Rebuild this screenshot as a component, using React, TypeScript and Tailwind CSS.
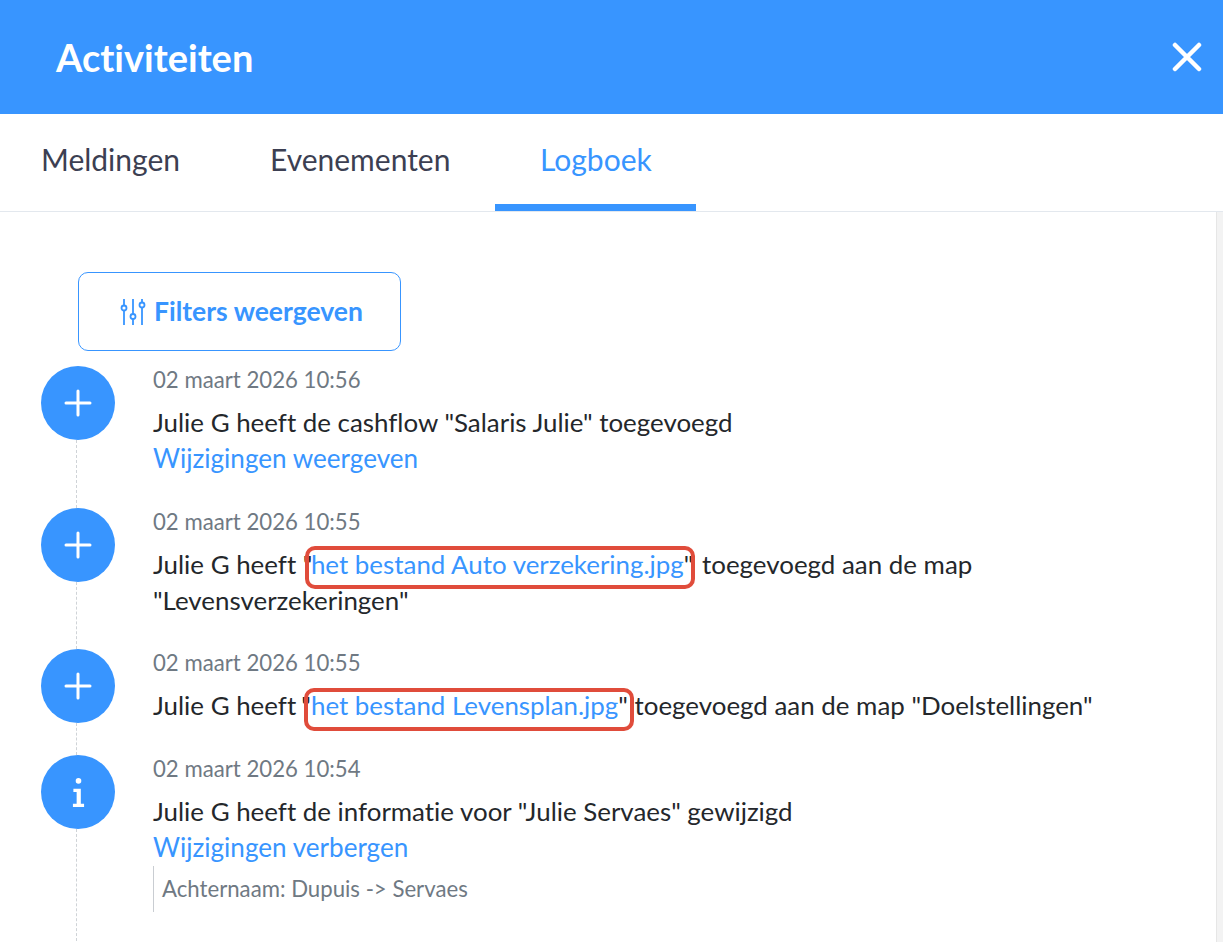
import { ReactNode } from "react";

const Plus = () => (
	<svg width="28" height="28" viewBox="0 0 28 28" fill="none" stroke="white" strokeWidth="3" strokeLinecap="round">
		<path d="M14 2v24M2 14h24" />
	</svg>
);

const Info = () => (
	<svg width="13" height="29" viewBox="0 0 14 31" fill="white">
		<circle cx="7" cy="3" r="3" />
		<path d="M1.500 11.500h8v16h3.500v3.500H1v-3.500h4v-12.500H1.500z" />
	</svg>
);

const Marked = ({ children, className }: { children: ReactNode; className: string }) => (
	<span className="relative -ml-[1.5px]">
		{children}
		<span className={"absolute rounded-[10px] border-4 border-[#e04c3b] pointer-events-none " + className} />
	</span>
);

const Row = ({
	icon,
	date,
	className,
	children,
}: {
	icon: ReactNode;
	date: string;
	className: string;
	children: ReactNode;
}) => (
	<div className="flex gap-[38px]">
		<div className="w-[74px] shrink-0 flex flex-col">
			<div className="w-[74px] h-[74px] shrink-0 rounded-full bg-[#3895ff] flex items-center justify-center">{icon}</div>
			<div className="flex-1 ml-[35px] border-l border-dashed border-[#cfd3d7]" />
		</div>
		<div className={"flex-1 min-w-0 " + className}>
			<div className="text-[22.2px] leading-[28px] text-[#6f7983]">{date}</div>
			<div className="mt-[10px] text-[25.9px] leading-[36px] text-[#24272b]">{children}</div>
		</div>
	</div>
);

const App = () => {
	return (
		<div className="w-[1223px] h-[942px] overflow-hidden bg-white flex flex-col font-['Lato',sans-serif] [font-variant-ligatures:none]">
			<header className="h-[114px] shrink-0 bg-[#3895ff] flex items-center justify-between pl-[56px] pr-[21px]">
				<h1 className="text-[38px] font-bold text-white">Activiteiten</h1>
				<svg width="30" height="30" viewBox="0 0 30 30" fill="none" stroke="white" strokeWidth="4.500" strokeLinecap="round">
					<path d="M3 3l24 24M27 3L3 27" />
				</svg>
			</header>
			<nav className="h-[98px] shrink-0 flex border-b border-[#e3e8ee] text-[30px] leading-[40px] text-[#3c3f52]">
				<div className="w-[225px] pl-[41px] pt-[25px]">Meldingen</div>
				<div className="w-[270px] pl-[45px] pt-[25px]">Evenementen</div>
				<div className="w-[201px] h-[97px] pl-[45px] pt-[25px] text-[#3895ff] border-b-[7px] border-[#3895ff]">Logboek</div>
			</nav>
			<div className="flex-1 min-h-0 flex">
				<main className="flex-1 min-w-0 pl-[41px] pt-[60px]">
					<button className="ml-[37px] mb-[15px] w-[323px] h-[79px] rounded-[10px] border border-[#3895ff] flex items-center justify-center gap-[8px] pl-[4px] text-[26.5px] font-bold text-[#3895ff]">
						<svg width="26" height="28" viewBox="0 0 26 28" fill="none" stroke="#3895ff" strokeWidth="1.800">
							<path d="M4 1v6.500M4 12.500V27M13 1v15M13 21v6M22 1v3.500M22 9.500V27" />
							<circle cx="4" cy="10" r="2.500" />
							<circle cx="13" cy="18.500" r="2.500" />
							<circle cx="22" cy="7" r="2.500" />
						</svg>
						Filters weergeven
					</button>
					<Row icon={<Plus />} date="02 maart 2026 10:56" className="pb-[32px]">
						<div>Julie G heeft de cashflow "Salaris Julie" toegevoegd</div>
						<div className="text-[26.1px] text-[#3895ff]">Wijzigingen weergeven</div>
					</Row>
					<Row icon={<Plus />} date="02 maart 2026 10:55" className="pb-[31px]">
						Julie G heeft "
						<Marked className="-left-[6px] -right-[2px] -top-[2px] -bottom-[9px]">
							<span className="text-[#3895ff]">het bestand Auto verzekering.jpg</span>"
						</Marked>{" "}
						<span className="ml-[2px]">toegevoegd aan de map "Levensverzekeringen"</span>
					</Row>
					<Row icon={<Plus />} date="02 maart 2026 10:55" className="pb-[32px]">
						Julie G heeft{" "}
						<Marked className="left-[3px] -right-[6px] -top-[1px] -bottom-[10px]">
							"<span className="text-[#3895ff]">het bestand Levensplan.jpg</span>"
						</Marked>{" "}
						toegevoegd aan de map "Doelstellingen"
					</Row>
					<Row icon={<Info />} date="02 maart 2026 10:54" className="h-[300px]">
						<div>Julie G heeft de informatie voor "Julie Servaes" gewijzigd</div>
						<div className="text-[26.1px] text-[#3895ff]">Wijzigingen verbergen</div>
						<div className="mt-[1px] h-[46px] border-l border-[#c9cdd2] pl-[8px] flex items-center text-[22.2px] text-[#6f7983]">
							Achternaam: Dupuis -&gt; Servaes
						</div>
					</Row>
				</main>
				<div className="w-[7px] shrink-0 bg-[#f3f3f3] border-l border-[#e6e6e6]" />
			</div>
		</div>
	);
};

export default App;
